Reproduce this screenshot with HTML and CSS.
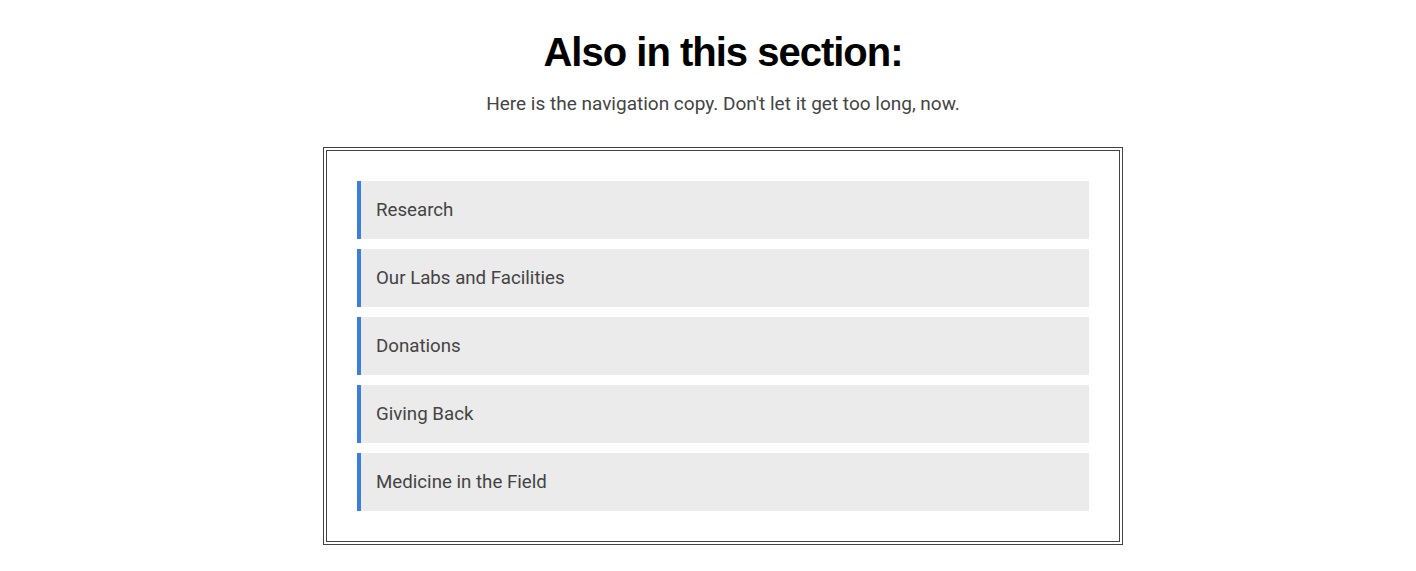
FILE: index.html
```html
<!DOCTYPE html>
<html lang="en">
<head>
    <meta charset="UTF-8">
    <meta name="viewport" content="width=device-width, initial-scale=1">
    <title>Also in this section</title>
    <link rel="stylesheet" href="styles.css">
</head>
<body>
<div class="section-nav">
    <h1>Also in this section:</h1>
    <p class="intro">Here is the navigation copy. Don't let it get too long, now.</p>
    <div class="nav-box">
        <ul class="nav-list">
            <li><a href="#">Research</a></li>
            <li><a href="#">Our Labs and Facilities</a></li>
            <li><a href="#">Donations</a></li>
            <li><a href="#">Giving Back</a></li>
            <li><a href="#">Medicine in the Field</a></li>
        </ul>
    </div>
</div>
</body>
</html>
```

FILE: styles.css
```css
body {
    margin: 0;
    background: #fff;
    font-family: "Roboto", "Liberation Sans", sans-serif;
    color: #444;
}

.section-nav {
    padding: 0 0 0 30px;
    display: flex;
    flex-direction: column;
    align-items: center;
}

h1 {
    margin: 28px 0 0;
    font-family: "Liberation Sans", Arial, sans-serif;
    font-size: 40px;
    font-weight: bold;
    line-height: 48px;
    color: #000;
    letter-spacing: -1px;
}

.intro {
    margin: 16px 0 0;
    font-size: 19px;
    line-height: 24px;
}

.nav-box {
    box-sizing: border-box;
    width: 800px;
    margin-top: 31px;
    padding: 30px;
    border: 4px double #444;
}

.nav-list {
    list-style: none;
    margin: 0;
    padding: 0;
    display: flex;
    flex-direction: column;
    gap: 10px;
}

.nav-list a {
    display: block;
    height: 58px;
    line-height: 58px;
    padding-left: 15px;
    background: #ebebeb;
    border-left: 4px solid #3a7fdc;
    font-size: 18.7px;
    color: #444;
    text-decoration: none;
}
```
